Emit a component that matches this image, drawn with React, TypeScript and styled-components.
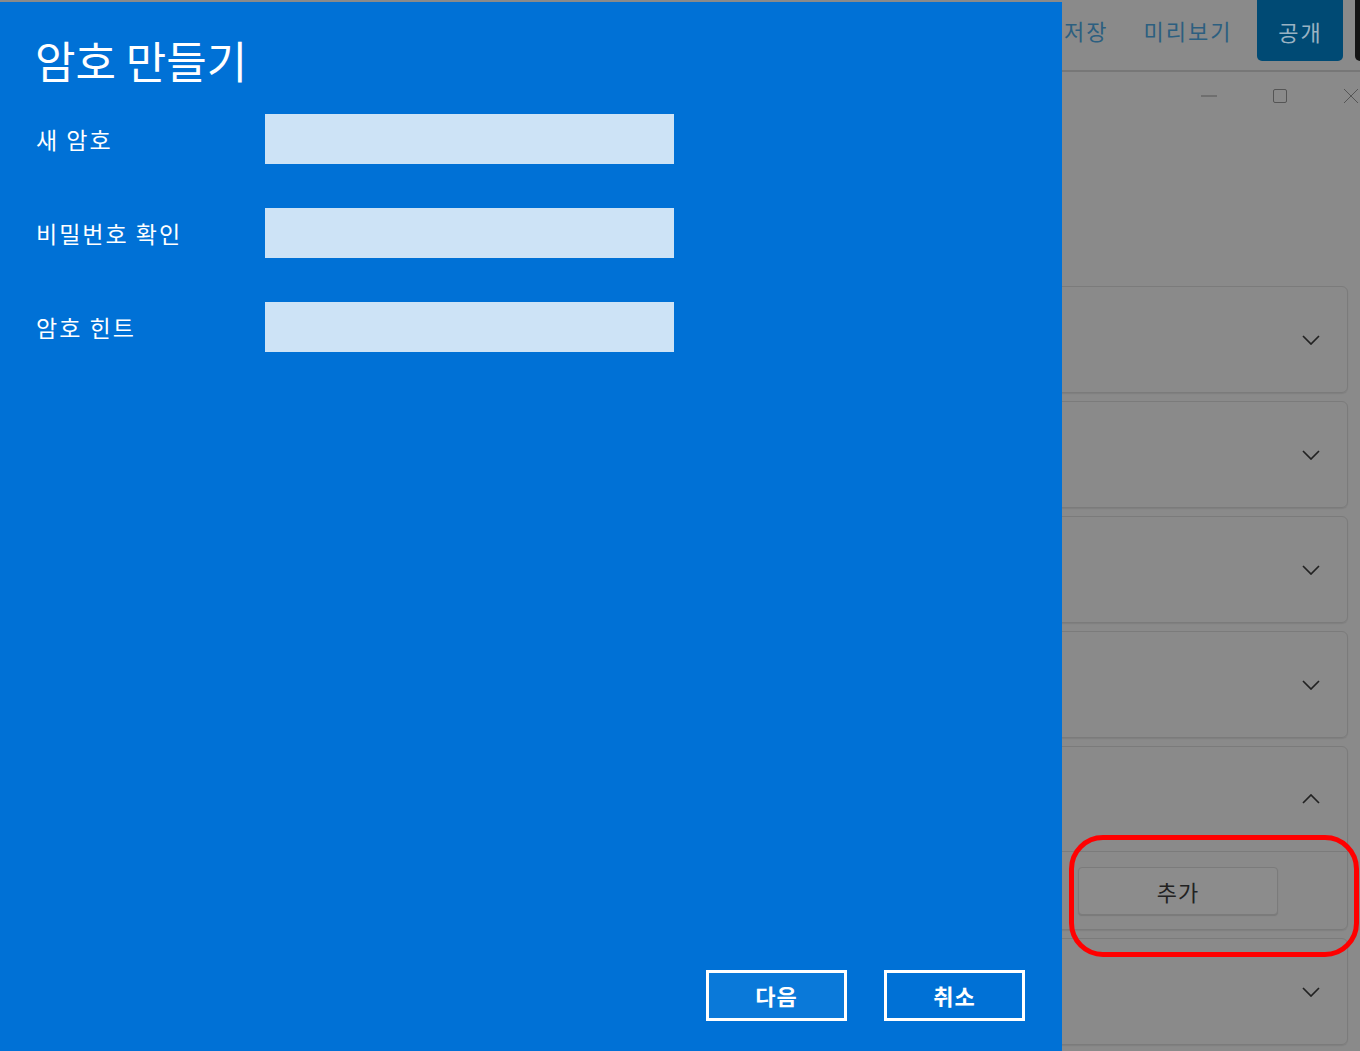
import styled, { createGlobalStyle } from 'styled-components';

const GlobalStyle = createGlobalStyle`
  html, body {
    margin: 0;
    padding: 0;
    background: #8a8a8a;
    overflow: hidden;
  }
  body {
    font-family: "Noto Sans CJK KR", "Noto Sans", sans-serif;
  }
`;

const Page = styled.div`
  position: relative;
  display: flex;
  width: 1360px;
  height: 1051px;
  overflow: hidden;
  background: #8a8a8a;
`;

const Dialog = styled.section`
  flex: 0 0 1062px;
  margin-top: 2px;
  display: flex;
  flex-direction: column;
  background: #0071d6;
  color: #fff;
  padding: 29px 37px 30px 35px;
  box-sizing: border-box;
  z-index: 1;
`;

const Title = styled.h1`
  margin: 0;
  font-size: 44px;
  line-height: 58px;
  font-weight: 400;
`;

const Form = styled.div`
  display: grid;
  grid-template-columns: 230px 409px;
  grid-auto-rows: 50px;
  row-gap: 44px;
  margin-top: 25px;
`;

const Label = styled.label`
  display: flex;
  align-items: center;
  font-size: 23px;
  letter-spacing: 2px;
  padding-left: 1px;
`;

const Field = styled.input`
  border: none;
  outline: none;
  margin: 0;
  padding: 0 10px;
  background: #cde3f6;
  font-size: 20px;
`;

const Footer = styled.div`
  margin-top: auto;
  display: flex;
  justify-content: flex-end;
  gap: 37px;
`;

const DialogButton = styled.button<{ $focused?: boolean }>`
  width: 141px;
  height: 51px;
  border: 3px solid #fff;
  background: ${(p) => (p.$focused ? '#0a79d9' : 'transparent')};
  color: #fff;
  font-family: inherit;
  font-size: 22px;
  font-weight: 700;
  letter-spacing: 1px;
  padding: 0 0 2px;
`;

const Pane = styled.div`
  flex: 1;
  min-width: 0;
  display: flex;
  flex-direction: column;
  overflow: hidden;
`;

const Header = styled.div`
  display: flex;
  align-items: flex-start;
  height: 70px;
  padding-left: 2px;
  border-bottom: 2px solid #777;
`;

const NavLink = styled.span<{ $gap?: number }>`
  flex-shrink: 0;
  white-space: nowrap;
  margin-right: ${(p) => p.$gap ?? 0}px;
  font-size: 22px;
  line-height: 61px;
  color: #2c5f80;
  letter-spacing: 2px;
`;

const PublishButton = styled.span`
  flex-shrink: 0;
  width: 86px;
  height: 61px;
  display: flex;
  align-items: center;
  justify-content: center;
  background: #004a74;
  border-radius: 0 0 5px 5px;
  color: #9ab2c2;
  font-size: 22px;
  letter-spacing: 2px;
  white-space: nowrap;
`;

const DarkTab = styled.span`
  flex: 0 0 20px;
  height: 61px;
  margin-left: 12px;
  background: #141414;
  border-radius: 0 0 5px 5px;
`;

const WindowControls = styled.div`
  display: flex;
  justify-content: flex-end;
  height: 48px;
  margin-right: -26px;
`;

const ControlButton = styled.span`
  flex-shrink: 0;
  width: 71px;
  display: flex;
  align-items: center;
  justify-content: center;
  color: #555;
`;

const CardList = styled.div`
  display: flex;
  flex-direction: column;
  gap: 8px;
  margin: 166px 12px 0 -24px;
`;

const Card = styled.div`
  border: 1px solid #7b7b7b;
  border-radius: 6px;
  box-shadow: 0 1px 1px rgba(0, 0, 0, 0.08);
`;

const CardHeader = styled.div<{ $height: number }>`
  height: ${(p) => p.$height}px;
  display: flex;
  align-items: center;
  justify-content: flex-end;
  padding-right: 27px;
`;

const CardBody = styled.div`
  border-top: 1px solid #7b7b7b;
  padding: 15px 0 14px 39px;
`;

const AddButton = styled.button`
  width: 200px;
  height: 48px;
  border: 1px solid #7b7b7b;
  border-radius: 4px;
  background: #8c8c8c;
  box-shadow: 0 1px 1px rgba(0, 0, 0, 0.12);
  color: #222;
  font-family: inherit;
  font-size: 22px;
  letter-spacing: 1px;
  padding: 0;
`;

const Annotation = styled.div`
  position: absolute;
  left: 1069px;
  top: 835px;
  width: 290px;
  height: 122px;
  box-sizing: border-box;
  border: 5px solid #ff0000;
  border-radius: 34px;
  pointer-events: none;
  z-index: 2;
`;

const Chevron = ({ up }: { up?: boolean }) => (
  <svg width="18" height="10" viewBox="0 0 18 10">
    <polyline
      points={up ? '1,9 9,1 17,9' : '1,1 9,9 17,1'}
      fill="none"
      stroke="#222"
      strokeWidth="1.7"
    />
  </svg>
);

const fields = ['새 암호', '비밀번호 확인', '암호 힌트'];

export default function App() {
  return (
    <>
      <GlobalStyle />
      <Page>
        <Dialog>
          <Title>암호 만들기</Title>
          <Form>
            {fields.map((f) => [
              <Label key={f + '-l'}>{f}</Label>,
              <Field key={f + '-i'} type="password" />,
            ])}
          </Form>
          <Footer>
            <DialogButton $focused>다음</DialogButton>
            <DialogButton>취소</DialogButton>
          </Footer>
        </Dialog>

        <Pane>
          <Header>
            <NavLink $gap={35}>저장</NavLink>
            <NavLink $gap={25}>미리보기</NavLink>
            <PublishButton>공개</PublishButton>
            <DarkTab />
          </Header>
          <WindowControls>
            <ControlButton>
              <svg width="16" height="16" viewBox="0 0 16 16">
                <line x1="0" y1="8" x2="16" y2="8" stroke="currentColor" strokeWidth="1" />
              </svg>
            </ControlButton>
            <ControlButton>
              <svg width="16" height="16" viewBox="0 0 16 16">
                <rect x="1.5" y="1.5" width="13" height="13" rx="1.5" fill="none" stroke="currentColor" strokeWidth="1" />
              </svg>
            </ControlButton>
            <ControlButton>
              <svg width="16" height="16" viewBox="0 0 16 16">
                <path d="M1 1 L15 15 M15 1 L1 15" stroke="currentColor" strokeWidth="1" />
              </svg>
            </ControlButton>
          </WindowControls>
          <CardList>
            <Card>
              <CardHeader $height={105}><Chevron /></CardHeader>
            </Card>
            <Card>
              <CardHeader $height={105}><Chevron /></CardHeader>
            </Card>
            <Card>
              <CardHeader $height={105}><Chevron /></CardHeader>
            </Card>
            <Card>
              <CardHeader $height={105}><Chevron /></CardHeader>
            </Card>
            <Card>
              <CardHeader $height={104}><Chevron up /></CardHeader>
              <CardBody>
                <AddButton>추가</AddButton>
              </CardBody>
            </Card>
            <Card>
              <CardHeader $height={105}><Chevron /></CardHeader>
            </Card>
          </CardList>
        </Pane>
        <Annotation />
      </Page>
    </>
  );
}
